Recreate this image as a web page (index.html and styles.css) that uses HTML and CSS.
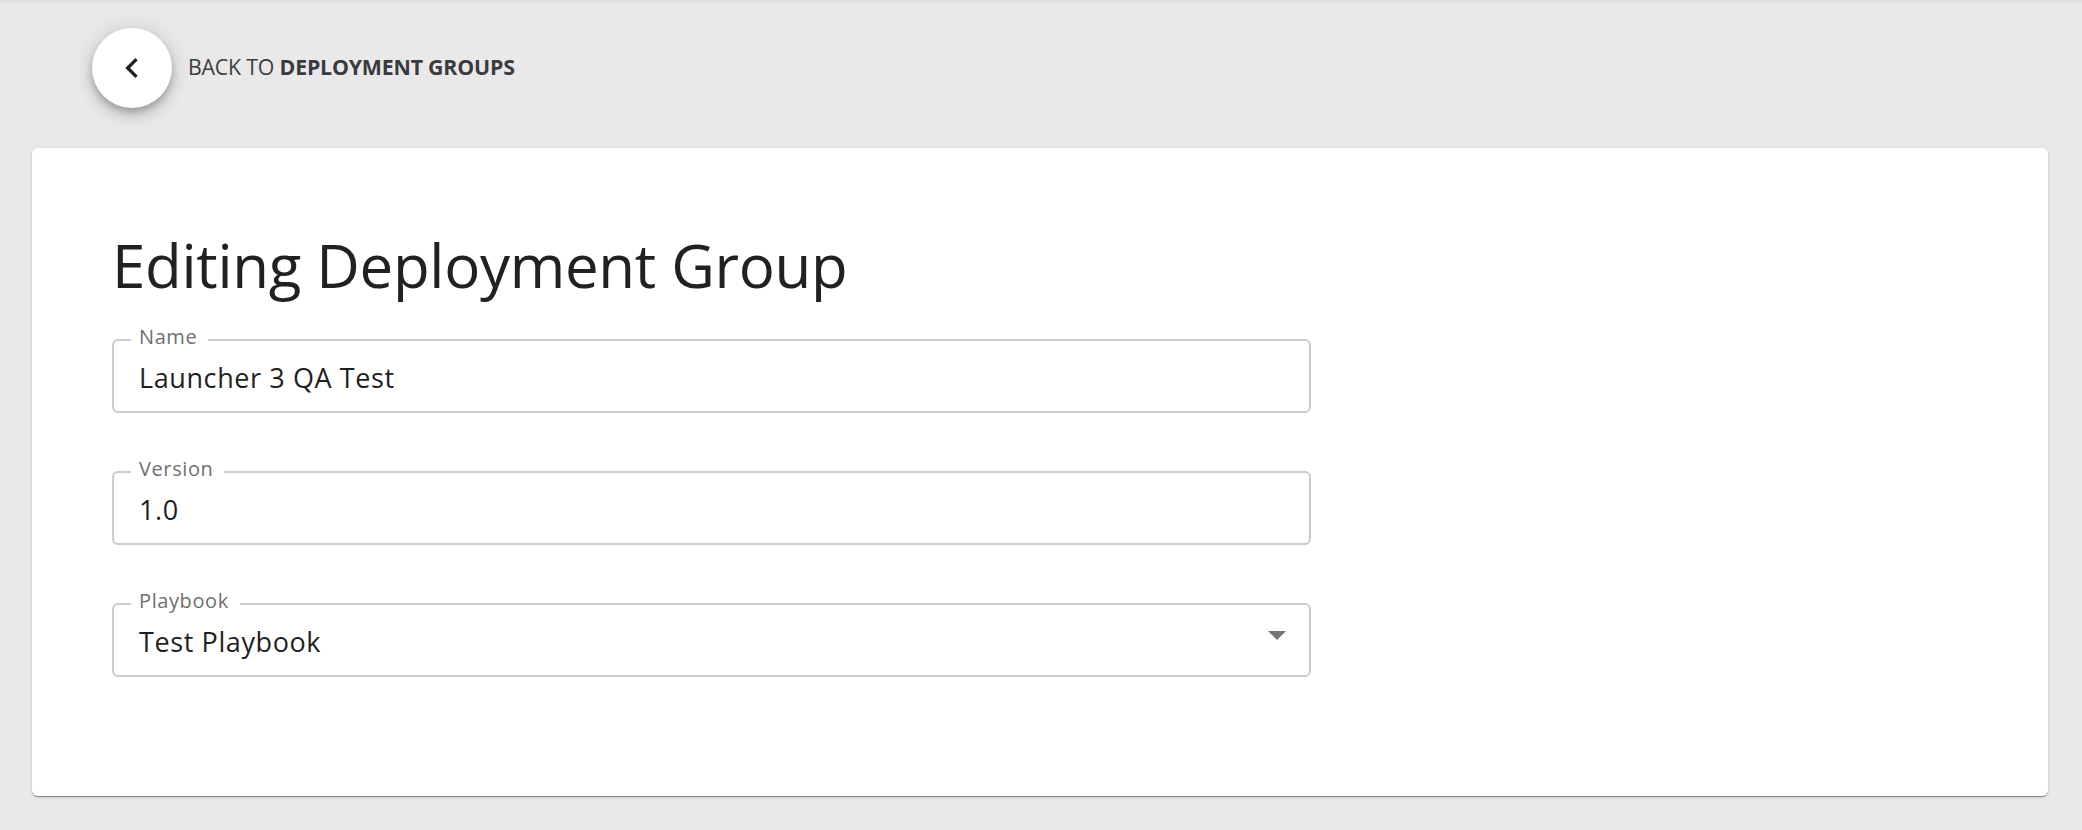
FILE: index.html
```html
<!DOCTYPE html>
<html lang="en">
<head>
<meta charset="utf-8">
<title>Editing Deployment Group</title>
<link rel="stylesheet" href="styles.css">
</head>
<body>
<div class="page">
  <header class="back-row">
    <button class="back-fab" type="button" aria-label="Back">
      <svg class="back-icon" viewBox="0 0 24 24" width="40" height="40"><path d="M15.41 7.41 14 6l-6 6 6 6 1.41-1.41L10.83 12z"/></svg>
    </button>
    <span class="back-text">BACK TO <strong>DEPLOYMENT GROUPS</strong></span>
  </header>
  <main class="card">
    <h1 class="title">Editing Deployment Group</h1>
    <form class="form">
      <div class="field">
        <span class="field-label">Name</span>
        <span class="field-value">Launcher 3 QA Test</span>
      </div>
      <div class="field">
        <span class="field-label">Version</span>
        <span class="field-value">1.0</span>
      </div>
      <div class="field select">
        <span class="field-label">Playbook</span>
        <span class="field-value">Test Playbook</span>
        <svg class="arrow" viewBox="0 0 18 9" width="18" height="9"><polygon points="0,0 18,0 9,9"/></svg>
      </div>
    </form>
  </main>
</div>
</body>
</html>
```
FILE: styles.css
```css
* { box-sizing: border-box; }

html, body {
  margin: 0;
  padding: 0;
}

body {
  background: #e9e9e9;
  background-image: linear-gradient(to bottom, #dcdcdc 0, #e6e6e6 3px, #e9e9e9 6px);
  background-repeat: no-repeat;
  font-family: "Open Sans", "Noto Sans", sans-serif;
  color: #212121;
  min-height: 830px;
}

.page {
  padding: 0 34px 0 32px;
}

.back-row {
  display: flex;
  align-items: center;
  gap: 16px;
  padding: 28px 0 0 60px;
  height: 108px;
}

.back-fab {
  width: 80px;
  height: 80px;
  border-radius: 50%;
  border: 0;
  padding: 0;
  background: #ffffff;
  display: flex;
  align-items: center;
  justify-content: center;
  box-shadow: 0 4px 7px -1px rgba(0,0,0,0.2), 0 8px 13px 0 rgba(0,0,0,0.14), 0 1px 24px 0 rgba(0,0,0,0.12);
  flex: none;
}

.back-icon {
  fill: #1f1f1f;
  display: block;
}

.back-text {
  font-size: 21.33px;
  line-height: 28px;
  color: #3c3c3f;
  letter-spacing: -0.2px;
  margin-top: -2px;
}

.back-text strong {
  font-weight: 700;
  color: #3a3b40;
}

.card {
  margin-top: 40px;
  background: #ffffff;
  border-radius: 6px;
  height: 648px;
  padding: 81px 80px 0 80px;
  box-shadow: 0 2px 1px -1px rgba(0,0,0,0.3), 0 1px 1px 0 rgba(0,0,0,0.16), 0 1px 4px 0 rgba(0,0,0,0.12);
}

.title {
  margin: 0;
  font-size: 60px;
  font-weight: 400;
  line-height: 72px;
  letter-spacing: -0.3px;
  color: #212121;
}

.form {
  margin-top: 38px;
  display: flex;
  flex-direction: column;
  gap: 58px;
}

.field {
  position: relative;
  width: 1199px;
  height: 74px;
  border: 2px solid #cbcbcb;
  border-radius: 6px;
  display: flex;
  align-items: flex-start;
  padding: 19px 23px 0 25px;
}

.field-label {
  position: absolute;
  top: -14px;
  left: 17px;
  padding: 0 11px 0 8px;
  background: #ffffff;
  font-size: 20px;
  line-height: 20px;
  letter-spacing: 0.6px;
  color: #6f6f6f;
}

.field-value {
  flex: 1;
  font-size: 27px;
  line-height: 36px;
  letter-spacing: 0.6px;
  color: #1f1f1f;
}

.arrow {
  flex: none;
  margin-top: 7px;
  fill: #757575;
  display: block;
}
```
